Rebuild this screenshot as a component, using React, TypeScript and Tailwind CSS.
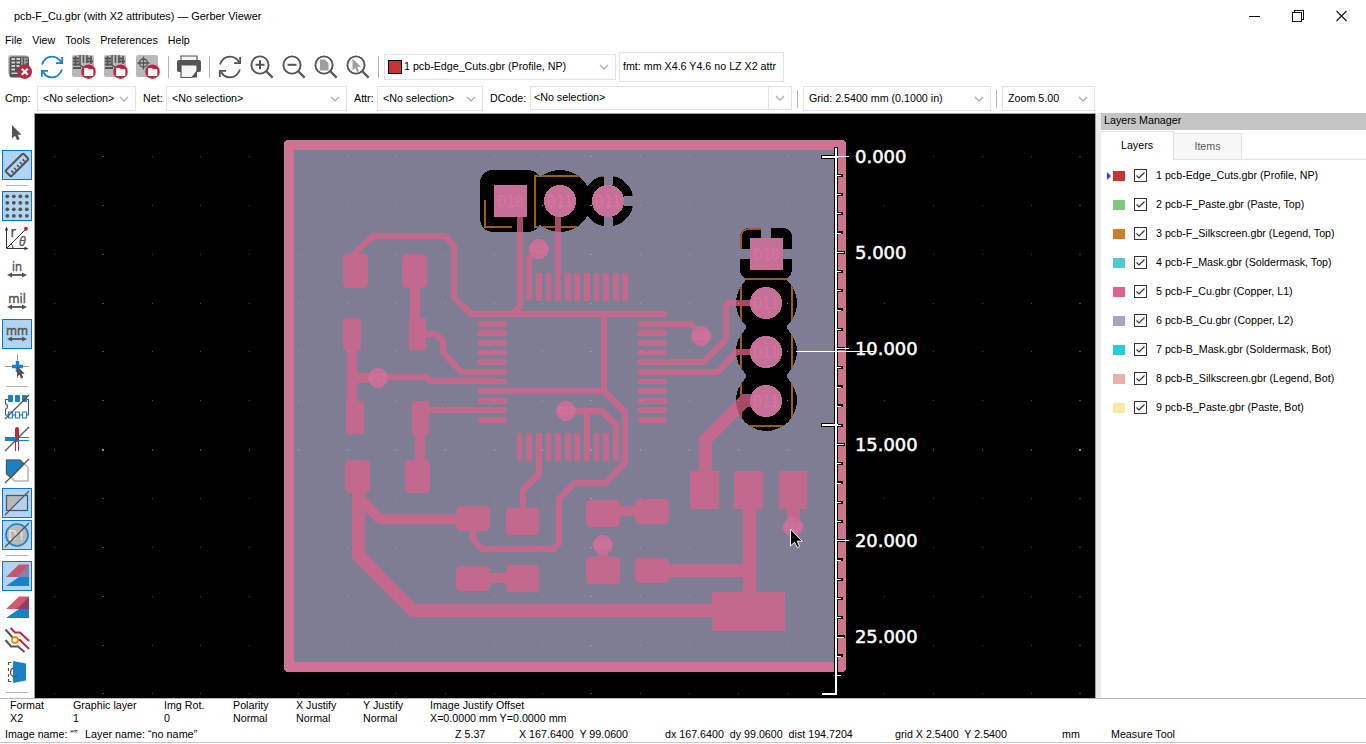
import React from "react";

const G = "#545454";
const BLUE = "#1a81c4";
const RED = "#bf2641";

function Chevron() {
  return (
    <svg className="block h-[6px] w-[10px] shrink-0" viewBox="0 0 10 6">
      <path d="M1 1 L5 5 L9 1" fill="none" stroke="#b4b4b4" strokeWidth="1.5" />
    </svg>
  );
}

function Combo({ text, cls }: { text: string; cls: string }) {
  return (
    <div className={"flex h-[25px] shrink-0 items-center justify-between border border-[#e2e2e2] bg-white pl-[5px] pr-[6px] " + cls}>
      <span>{text}</span>
      <Chevron />
    </div>
  );
}

function Svg24({ children }: { children: React.ReactNode }) {
  return (
    <svg className="block h-6 w-6 shrink-0 overflow-visible" viewBox="0 0 24 24">
      {children}
    </svg>
  );
}

function TopIcon({ children }: { children: React.ReactNode }) {
  return (
    <div className="flex h-8 w-8 shrink-0 items-center justify-center">
      <Svg24>{children}</Svg24>
    </div>
  );
}

function Board() {
  return (
    <>
      <rect x="0" y="0" width="22" height="22" rx="2" fill="#b9b9b9" />
      <g fill="none" stroke={G} strokeWidth="1.5">
        <path d="M3.5 1 v10 M8 0 v10 l4 3 v6 M15 0 v8 M11.5 0 v8 M19 1 v8" />
        <path d="M1 3.5 h6 M1 6.500 h6 M1 9.500 h7 M14 3.500 h6 M14 6.500 h7" strokeWidth="1.800" />
      </g>
      <rect x="1" y="12" width="8" height="2" fill={G} />
    </>
  );
}

function FolderBadge() {
  return (
    <>
      <circle cx="16.500" cy="16.700" r="7.300" fill={RED} />
      <path d="M12.700 13.700 h3 l1 1.200 h4 v5.400 h-8 z" fill="#fff" stroke="#fff" strokeWidth="1.200" strokeLinejoin="round" />
    </>
  );
}

function Refresh({ color }: { color: string }) {
  return (
    <g fill="none" stroke={color} strokeWidth="1.8">
      <path d="M2 9.5 C4 4 8 1.6 12 1.6 C16 1.6 19.5 4 21.5 8" />
      <path d="M22.2 2 V8.200 H16" />
      <path d="M22 14.5 C20 20 16 22.4 12 22.4 C8 22.4 4.5 20 2.5 16" />
      <path d="M1.8 22 V15.8 H8" />
    </g>
  );
}

function Lens({ children }: { children: React.ReactNode }) {
  return (
    <>
      <circle cx="10" cy="10" r="8.6" fill="none" stroke={G} strokeWidth="1.9" />
      <path d="M16.3 16.3 L22.600 22.600" stroke={G} strokeWidth="2.2" />
      {children}
    </>
  );
}

function Sep() {
  return <div className="mx-1 h-[22px] w-px shrink-0 bg-[#b4b4b4]" />;
}

function TopToolbar() {
  return (
    <div className="flex h-8 items-center pl-1">
      <TopIcon>
        <rect x="0" y="0" width="20" height="20" rx="3" fill="#c4c4c4" />
        <rect x="1.500" y="1.500" width="19.500" height="21" rx="2" fill={G} />
        <g fill="#d0d0d0">
          <rect x="3.500" y="3" width="3.500" height="2" /><rect x="3.500" y="6.500" width="3.500" height="2" /><rect x="3.500" y="10" width="3.500" height="2" /><rect x="3.500" y="13.500" width="3.500" height="2" />
          <rect x="8.500" y="3" width="3.500" height="2" /><rect x="8.500" y="6.500" width="3.500" height="2" /><rect x="8.500" y="10" width="3" height="2" />
          <path d="M13.500 2.500h1v8h-1zM16.500 2.500h1v7h-1zM18 3.500h2v1h-2zM18 6.500h2v1h-2zM3.500 17.500h6v1.500h-6z" />
        </g>
        <circle cx="16.800" cy="16.700" r="7.200" fill={RED} />
        <path d="M13.800 13.700 l6 6 M19.800 13.700 l-6 6" stroke="#fff" strokeWidth="2.2" />
      </TopIcon>
      <TopIcon><Refresh color={BLUE} /></TopIcon>
      <TopIcon><Board /><FolderBadge /></TopIcon>
      <TopIcon><Board /><FolderBadge /></TopIcon>
      <TopIcon>
        <rect x="0" y="0" width="22" height="22" rx="2.5" fill="#b9b9b9" />
        <g fill="none" stroke={G} strokeWidth="1.3">
          <circle cx="7.5" cy="8" r="4" />
          <path d="M7.5 1.5 v13 M1.5 8 h12" />
        </g>
        <FolderBadge />
      </TopIcon>
      <Sep />
      <TopIcon>
        <path d="M4 1 h16 v5 H4 z" fill="#f5f5f5" stroke={G} strokeWidth="1.2" />
        <path d="M0 7 q0 -2 2 -2 h20 q2 0 2 2 v8 q0 2 -2 2 H2 q-2 0 -2 -2 z" fill={G} />
        <path d="M4 10 h16 v6 l-5 6.5 H4 z" fill="#f5f5f5" stroke={G} strokeWidth="1.2" />
        <path d="M20 16 v6.5 h-5 z" fill={G} />
      </TopIcon>
      <Sep />
      <TopIcon><Refresh color={G} /></TopIcon>
      <TopIcon><Lens><path d="M5.500 9.800 h9 M10 5.300 v9" stroke={G} strokeWidth="2" /></Lens></TopIcon>
      <TopIcon><Lens><path d="M5.500 9.800 h9" stroke={G} strokeWidth="2" /></Lens></TopIcon>
      <TopIcon><Lens><path d="M6 4.5 h5 l3.5 3.5 v7.500 h-8.5 z" fill="#a0a0a0" /></Lens></TopIcon>
      <TopIcon><Lens><path d="M6.5 3.5 v12 l2.8 -2.6 l1.8 4 l2 -1 l-1.8 -3.8 h3.7 z" fill="#a0a0a0" /></Lens></TopIcon>
      <Sep />
      <div className="ml-px flex h-[26px] w-[232px] shrink-0 items-center border border-[#e2e2e2] pl-[3px] pr-[6px]">
        <div className="h-[14px] w-[14px] border border-black bg-[#c83434]" />
        <span className="ml-[2px] flex-1 pb-px">1 pcb-Edge_Cuts.gbr (Profile, NP)</span>
        <Chevron />
      </div>
      <div className="ml-[3px] flex h-[30px] w-[165px] shrink-0 items-center border border-[#e2e2e2] pb-px pl-[3px]">fmt: mm X4.6 Y4.6 no LZ X2 attr</div>
    </div>
  );
}

function SelectBar() {
  return (
    <div className="flex h-[31px] items-center pl-[5px]">
      <span className="w-[32px] shrink-0">Cmp:</span>
      <Combo text="<No selection>" cls="w-[99px]" />
      <span className="ml-[7px] w-[23px] shrink-0">Net:</span>
      <Combo text="<No selection>" cls="w-[181px]" />
      <span className="ml-[7px] w-[23px] shrink-0">Attr:</span>
      <Combo text="<No selection>" cls="w-[106px]" />
      <span className="ml-[7px] w-[40px] shrink-0">DCode:</span>
      <div className="mt-[3px] flex h-6 w-[262px] shrink-0 items-center self-start border border-[#e2e2e2] pl-[3px]">
        <span className="flex-1 pb-px">&lt;No selection&gt;</span>
        <div className="flex h-full w-[23px] items-center justify-center border-l border-[#e2e2e2]"><Chevron /></div>
      </div>
      <div className="ml-[5px] h-[18px] w-px shrink-0 bg-[#b4b4b4]" />
      <Combo text="Grid: 2.5400 mm (0.1000 in)" cls="ml-[5px] w-[188px]" />
      <div className="ml-[5px] h-[18px] w-px shrink-0 bg-[#b4b4b4]" />
      <Combo text="Zoom 5.00" cls="ml-[5px] w-[93px]" />
    </div>
  );
}

function Tool({ on, children }: { on?: boolean; children: React.ReactNode }) {
  return (
    <div className="flex h-8 w-[34px] items-center justify-center">
      <div className={on ? "flex h-[30px] w-[30px] items-center justify-center border border-[#0078d7] bg-[#b0d4f1]" : "flex h-[30px] w-[30px] items-center justify-center"}>
        <Svg24>{children}</Svg24>
      </div>
    </div>
  );
}

function HSep() {
  return (
    <div className="flex h-[9px] w-[34px] items-center justify-center">
      <div className="h-px w-[22px] bg-[#b4b4b4]" />
    </div>
  );
}

function UnitIcon({ label, w }: { label: string; w: number }) {
  return (
    <>
      <text x="12" y="12.500" textAnchor="middle" textLength={w} lengthAdjust="spacingAndGlyphs" fontFamily="Noto Sans, sans-serif" stroke={G} strokeWidth="0.400" fontSize="13" fill={G}>{label}</text>
      <path d="M5 17 H19" stroke={G} strokeWidth="1.800" />
      <path d="M2 17 l5 -2.600 v5.200 z M22 17 l-5 -2.600 v5.200 z" fill={G} />
    </>
  );
}

const gridDots = [2.5, 9, 15.5, 22];

function LeftToolbar() {
  const slash = <path d="M0 24 L24 0" stroke={G} strokeWidth="1.2" />;
  return (
    <div className="flex h-full w-[34px] shrink-0 flex-col bg-white pt-[3px]">
      <Tool><path d="M7 4 v13.5 l3 -2.8 l2.2 4.6 l2.5 -1.2 l-2.2 -4.4 h4 z" fill={G} /></Tool>
      <Tool on>
        <g transform="rotate(-45 12 12)" fill="none" stroke={G} strokeWidth="2">
          <rect x="-0.500" y="8" width="25" height="8" rx="1" />
          <path d="M4 15 v-3 M8 15 v-3 M12 15 v-3 M16 15 v-3 M20 15 v-3" strokeWidth="1.6" />
        </g>
      </Tool>
      <HSep />
      <Tool on>
        {gridDots.map((x) => gridDots.map((y) => <circle key={x + "-" + y} cx={x - 0.2} cy={y - 0.2} r="1.9" fill={G} />))}
      </Tool>
      <Tool>
        <g fill="none" stroke="#333" strokeWidth="1">
          <path d="M1.5 22 V3 M1.5 22.5 H21 M2 22 L20 4 M6 18 q2 1 2 4" />
        </g>
        <path d="M1.500 0.500 l-1.700 4 h3.400 z M23.500 22.500 l-4 -1.700 v3.400 z" fill="#333" />
        <circle cx="21" cy="2.700" r="2" fill={RED} />
        <text x="5.500" y="11" fontFamily="Noto Sans, sans-serif" fontSize="13.500" fill={G} stroke={G} strokeWidth="0.300">r</text>
        <text x="14" y="19.5" fontFamily="Noto Sans, sans-serif" fontStyle="italic" fontSize="12.500" fill={G} stroke={G} strokeWidth="0.300">θ</text>
      </Tool>
      <Tool><UnitIcon label="in" w={10} /></Tool>
      <Tool><UnitIcon label="mil" w={17.5} /></Tool>
      <Tool on><UnitIcon label="mm" w={22} /></Tool>
      <Tool>
        <path d="M0 12.5 H24 M12.5 0.5 V24" stroke="#9a9a9a" strokeWidth="1" />
        <path d="M12.5 7 v11 M7 12.5 h11" stroke={BLUE} strokeWidth="3.5" />
        <path d="M12 12 v11 l2.4 -2.2 l1.6 3.6 l2.2 -1 l-1.6 -3.6 h3.2 z" fill={G} />
      </Tool>
      <HSep />
      <Tool>
        <path d="M3 4.5 H0.500 V9 q2 0 2 2.5 q0 2.500 -2 2.5 V20 h3 M22 4.500 h1.500 V20 H3" fill="none" stroke={G} strokeWidth="1.1" />
        <path d="M3.500 0.500 h4 v6 h-4z M10.500 0.500 h4 v6 h-4z M17.500 0.500 h4 v6 h-4z" fill={BLUE} stroke={BLUE} />
        <path d="M3.500 17 h4 v6 h-4z M10.500 17 h4 v6 h-4z M17.500 17 h4 v6 h-4z" fill="#fff" stroke={BLUE} strokeWidth="1.200" />
        {slash}
      </Tool>
      <Tool>
        <path d="M10.500 11 V24 M13.500 11 V24" stroke={RED} strokeWidth="1" />
        <path d="M12 2 V13" stroke={RED} strokeWidth="4" strokeLinecap="round" />
        <path d="M0 12 H11" stroke={BLUE} strokeWidth="4" />
        <path d="M11 10.500 H24 M11 13.500 H24" stroke={BLUE} strokeWidth="1" />
        {slash}
      </Tool>
      <Tool>
        <path d="M1.500 1 H15 L23 8 V22 H9 L1.500 15 Z" fill="#fff" stroke="#c9c9c9" strokeWidth="1.500" />
        <path d="M1.500 1 H15 L19 5 L6 18.500 L1.500 15 Z" fill={BLUE} stroke={G} strokeWidth="1.200" />
        <path d="M7 18 L10 22 H23 V9 L20 5" fill="none" stroke="#bababa" strokeWidth="1.200" />
        {slash}
      </Tool>
      <Tool on>
        <path d="M1.500 19.500 V4.500 H19.500 L4.500 19.500 Z" fill="#b9b9b9" />
        <rect x="1.500" y="4.500" width="21" height="15" fill="none" stroke={G} strokeWidth="1.200" />
        {slash}
      </Tool>
      <Tool on>
        <circle cx="12" cy="12" r="11" fill="#b9b9b9" stroke={BLUE} strokeWidth="1.600" />
        <text x="3" y="16.500" fontFamily="Noto Sans, sans-serif" fontSize="14" fill="#e9e9e9" textLength="17" lengthAdjust="spacingAndGlyphs">D1</text>
        {slash}
      </Tool>
      <HSep />
      <Tool on>
        <path d="M1 22 L14 13 H24 V22 Z" fill={BLUE} />
        <path d="M1 13 L14 0.500 H24 V13 Z" fill="#c15670" />
        <path d="M12 13 L24 1 V13 Z" fill="#8583ad" />
      </Tool>
      <Tool>
        <path d="M1 22 L14 13 H24 V22 Z" fill={BLUE} />
        <path d="M1 13 L14 0.500 H24 V13 Z" fill="#cf5b70" />
        <path d="M12 13 L24 1 V13 Z" fill="#8f3f66" />
      </Tool>
      <Tool>
        <g fill="none" strokeWidth="2">
          <path d="M5.500 0 L10 4.500 H15 L24 13 M12 12 H15 L24 21" stroke={RED} />
          <path d="M0.500 1.500 L9 11 M0.500 12 L6 18.500 H13 L19.500 24" stroke={G} />
        </g>
        <circle cx="10" cy="12" r="3" fill="#fff" stroke="#f29100" strokeWidth="1.800" />
      </Tool>
      <Tool>
        <path d="M8 1 L21 3.500 V20.500 L8 23 Z" fill={BLUE} />
        <path d="M6 2.500 H3.500 V5 M3.500 8 v3 M3.500 14 v3 M3.500 19 V21.500 H6 M8 8 q-2.500 1 -2.500 4.500 q0 3.500 4 4.500" fill="none" stroke={G} strokeWidth="1.200" />
        <path d="M7 16 q4 2.500 6 -0.500 q-3 0 -6 0.500" fill={G} />
      </Tool>
      <HSep />
    </div>
  );
}

const clears = (
  <>
    <rect x="480" y="170" width="61" height="62" rx="13" />
    <circle cx="560" cy="201" r="31" />
    <circle cx="608" cy="201" r="25.500" />
    <rect x="533" y="178" width="12" height="47" />
    <rect x="580" y="186" width="12" height="30" />
    <rect x="740" y="228" width="52" height="51" rx="9" />
    <rect x="745" y="272" width="42" height="20" />
    <circle cx="766.500" cy="303" r="30.500" />
    <circle cx="766.500" cy="351.500" r="30.500" />
    <circle cx="766.500" cy="400.500" r="30.500" />
    <rect x="746" y="303" width="41" height="98" />
  </>
);

const tracks: [number, string][] = [
  [6, "520,215 520,306 513,313"],
  [6, "558,215 558,300"],
  [6, "539,249 529,258 529,300"],
  [6, "354,257 354,254 373,236 445,236 454,245.5 454,297.5 471,314 667,314"],
  [10, "415,280 415,325"],
  [10, "352,340 352,405"],
  [6, "420,334 436,334 443,341 443,352.500 461.500,372 505,372"],
  [10, "357,377.500 372,377.500"],
  [6, "378,377 426,377 430,381 495,381"],
  [6, "480,391 604,391 625,412 625,462.700 606,482.700 575,482.700 559,499 559,543 553,549 482,549 473,539.500 473,525"],
  [6, "425,410 504,410"],
  [10, "420,430 420,465"],
  [6, "604,314 604,391"],
  [6, "660,323.500 690,323.500 700,334"],
  [6, "660,361.500 704,361.500 725.500,340 725.500,306 729,302.500 760,302.500"],
  [6, "660,371.700 718,371.700 737,351.500 760,351.500"],
  [13, "760,400.500 745,400.500 705.500,440 705.500,475"],
  [13, "749.500,500 749.500,600"],
  [13, "660,570.500 750,570.500"],
  [13, "793.500,505 793.500,527"],
  [13, "358.500,480 358.500,555.500 413,610.500 720,610.500"],
  [10, "361,500 379.500,518.500 460,518.500"],
  [10, "485,578 510,578"],
  [6, "539,455 539,474 523,490 523,512"],
  [6, "566,411 602,411 616,425 616,461"],
  [6, "587,411 587,461"],
  [10, "615,511 640,511"],
  [10, "603,545 603,560"],
];

const pads: [number, number, number, number, number][] = [
  [343, 254, 25, 34, 5], [402, 254, 25, 34, 5],
  [343, 318, 18, 32, 0], [409, 318, 17, 32, 0],
  [346, 401, 18, 33, 0], [412, 401, 17, 33, 0],
  [345, 460, 25, 33, 5], [405, 460, 25, 33, 5],
  [456, 506, 34, 25, 5], [506, 508, 33, 27, 4],
  [456, 566, 34, 25, 5], [506, 565, 33, 27, 4],
  [586, 500, 34, 27, 5], [635, 499, 34, 25, 5],
  [586, 557, 34, 27, 4], [635, 558, 34, 25, 5],
  [690, 471, 29, 38, 0], [734, 471, 29, 38, 0], [779, 471, 28, 38, 0],
  [712, 592, 73, 39, 0],
];

const pinY = [321, 330, 340, 350, 359, 369, 379, 388, 398, 407, 417];
const pinX: [number, number][] = [[517, 5], [526, 6], [536, 6], [546, 5], [555, 6], [565, 6], [574, 6], [584, 6], [594, 5], [603, 6], [613, 6], [622, 6]];
const vias: [number, number][] = [[539, 249], [378, 378], [566, 411], [701, 336], [603, 545], [793, 527]];
const bigPads: [number, number][] = [[560, 201], [608, 201], [766, 303], [766, 352], [766, 401]];
const dotXs = Array.from({ length: 22 }, (_, k) => k);
const dotYs = Array.from({ length: 12 }, (_, k) => k);
const labels: [string, number][] = [["0.000", 0], ["5.000", 5], ["10.000", 10], ["15.000", 15], ["20.000", 20], ["25.000", 25]];

function Copper() {
  return (
    <>
      {tracks.map(([w, p]) => (
        <polyline key={p} points={p} fill="none" strokeWidth={w} strokeLinejoin="round" />
      ))}
    </>
  );
}

function PcbCanvas() {
  const ticks = Array.from({ length: 28 }, (_, k) => k);
  return (
    <svg className="block h-[584px] w-[1060px]" viewBox="35 114 1060 584" shapeRendering="crispEdges">
      <defs>
        <clipPath id="clear">{clears}</clipPath>
      </defs>
      <rect x="35" y="114" width="1060" height="584" fill="#000" />
      <rect x="284" y="140" width="562" height="532" rx="4" fill="#cf7394" />
      <rect x="294" y="150" width="542" height="512" fill="#7f7d94" />
      <g fill="#000">{clears}</g>
      <g clipPath="url(#clear)" fill="none" stroke="#9c5d1c" strokeWidth="2">
        <path d="M485 200 V227 H512 M535 176 H633 V227 H535 Z M741 249 V237 Q741 229 749 229 H761 M741 279 H792 V426 H741 Z" />
      </g>
      <g fill="#7f7d94">
        <path d="M604 170h9v15h-9z M604 217h9v15h-9z M624 196h12v10h-12z M761 226h10v12h-10z M738 249h12v10h-12z M783 249h12v10h-12z" />
      </g>
      <g stroke="#c2688c"><Copper /></g>
      <g stroke="#a64868" clipPath="url(#clear)"><Copper /></g>
      <g fill="#c2688c">
        {pads.map(([x, y, w, h, r]) => <rect key={x + "-" + y} x={x} y={y} width={w} height={h} rx={r} />)}
        {pinY.map((y) => (
          <React.Fragment key={y}>
            <rect x="478" y={y} width="29" height={y === 350 || y === 379 ? 5 : 6} rx="2" />
            <rect x="638" y={y} width="29" height={y === 350 || y === 379 ? 5 : 6} rx="2" />
          </React.Fragment>
        ))}
        {pinX.map(([x, w], i) => (
          <React.Fragment key={x}>
            {i > 1 && <rect x={x} y="273" width={w} height="28" rx="1" />}
            {i < 11 && <rect x={x} y="433" width={w} height="28" rx="1" />}
          </React.Fragment>
        ))}
      </g>
      <g fill="#c66f98">
        <rect x="494" y="185" width="33" height="32" />
        <rect x="750" y="238" width="33" height="32" />
        {bigPads.map(([x, y]) => <circle key={x + "-" + y} cx={x} cy={y} r="16" />)}
        {vias.map(([x, y]) => <circle key={x + "-" + y} cx={x} cy={y} r="10" />)}
      </g>
      <g fill="#d4759a" stroke="#d4759a" strokeWidth="0.300" textAnchor="middle" fontFamily="DejaVu Sans Mono, monospace" shapeRendering="auto">
        <text x="510.500" y="206.500" fontSize="15" textLength="26">D10</text>
        <text x="766.500" y="259.500" fontSize="15" textLength="26">D10</text>
        {bigPads.map(([x, y]) => <text key={x + "-" + y} x={x} y={y + 5.500} fontSize="15" textLength="26">D11</text>)}
        {vias.map(([x, y]) => <text key={x + "-" + y} x={x} y={y + 3} fontSize="9" textLength="16">D12</text>)}
      </g>
      {dotXs.map((i) =>
        dotYs.map((j) => {
          const x = Math.floor(54.400 + i * 48.850);
          const y = Math.floor(156.500 + j * 48.850);
          const onBoard = x > 294 && x < 836 && y < 662;
          const mx = i % 10 === 1;
          const my = j === 6;
          return (
            <rect key={i + "-" + j} x={mx ? x - 1 : x} y={y} width={mx ? 2 : 1} height={my ? 2 : 1} fill={onBoard ? "#9a98aa" : mx && my ? "#8a8a8a" : "#484848"} />
          );
        })
      )}
      <g fill="#000">
        <rect x="834" y="147" width="4" height="548" />
        <rect x="821" y="155" width="16" height="4" />
        <rect x="821" y="423" width="16" height="4" />
        {ticks.slice(1).map((k) => (
          <rect key={k} x="838" y={Math.round(155.500 + k * 19.230) - 1} width={k % 5 === 0 ? 7 : 5} height="3" />
        ))}
      </g>
      <g fill="#fff">
        <rect x="835" y="148" width="2" height="547" />
        <rect x="822" y="156" width="16" height="2" />
        <rect x="822" y="424" width="16" height="2" />
        <rect x="822" y="693" width="15" height="2" />
        {ticks.map((k) => (
          <rect key={k} x="837" y={Math.round(155.800 + k * 19.230)} width={k % 10 === 0 ? 12 : k % 5 === 0 ? 7 : 4} height="1" />
        ))}
        <rect x="796" y="351" width="79" height="1" />
      </g>
      <g fill="#fff" stroke="#fff" strokeWidth="0.500" fontFamily="DejaVu Sans, sans-serif" fontSize="17.800" shapeRendering="auto">
        {labels.map(([t, k]) => (
          <text key={t} x="855" y={162.600 + k * 19.230} textLength={t.length === 5 ? 51.500 : 62.500} lengthAdjust="spacingAndGlyphs">{t}</text>
        ))}
      </g>
      <path d="M790.500 529 v17 l4 -3.800 l2.800 5.500 l2.400 -1.200 l-2.500 -5.300 h5 z" fill="#000" stroke="#fff" strokeWidth="1" shapeRendering="auto" />
    </svg>
  );
}

const layers: [string, string][] = [
  ["1 pcb-Edge_Cuts.gbr (Profile, NP)", "bg-[#c83434]"],
  ["2 pcb-F_Paste.gbr (Paste, Top)", "bg-[#7fc87f]"],
  ["3 pcb-F_Silkscreen.gbr (Legend, Top)", "bg-[#ce7d2c]"],
  ["4 pcb-F_Mask.gbr (Soldermask, Top)", "bg-[#4fcbcb]"],
  ["5 pcb-F_Cu.gbr (Copper, L1)", "bg-[#db628b]"],
  ["6 pcb-B_Cu.gbr (Copper, L2)", "bg-[#a7a5c6]"],
  ["7 pcb-B_Mask.gbr (Soldermask, Bot)", "bg-[#28ccd9]"],
  ["8 pcb-B_Silkscreen.gbr (Legend, Bot)", "bg-[#e8b2a7]"],
  ["9 pcb-B_Paste.gbr (Paste, Bot)", "bg-[#f2eda1]"],
];

function LayersPanel() {
  return (
    <div className="-mt-px flex h-[585px] flex-1 flex-col border-l-[5px] border-[#ebebeb] bg-white">
      <div className="h-[17px] bg-[#c5c5c5] pl-[3px] leading-[15px]">Layers Manager</div>
      <div className="flex h-[30px] items-end border-b border-[#e2e2e2]">
        <div className="-mb-px flex h-[29px] w-[73px] items-center justify-center border-r border-t border-[#e2e2e2] bg-white pb-px">Layers</div>
        <div className="flex h-[26px] w-[68px] items-center justify-center border-r border-t border-[#e2e2e2] bg-[#f7f7f7] text-[#5c5c5c]">Items</div>
      </div>
      <div className="flex flex-col pt-px">
        {layers.map(([name, color], i) => (
          <div key={name} className="flex h-[29px] items-center pl-[6px]">
            <svg className="block h-[8px] w-[4px]" viewBox="0 0 4 8">{i === 0 && <path d="M0 0 L4 4 L0 8 Z" fill="#3a3af8" />}</svg>
            <div className={"ml-[2px] h-[10px] w-[12px] " + color} />
            <svg className="ml-[9px] block h-[13px] w-[13px]" viewBox="0 0 13 13">
              <rect x="0.500" y="0.500" width="12" height="12" fill="#fff" stroke="#333" />
              <path d="M2.500 6.500 L5 9 L10.500 3.500" fill="none" stroke="#333" strokeWidth="1.200" />
            </svg>
            <span className="ml-[9px]">{name}</span>
          </div>
        ))}
      </div>
    </div>
  );
}

const info: [string, string, string][] = [
  ["Format", "X2", "w-[63px]"],
  ["Graphic layer", "1", "w-[91px]"],
  ["Img Rot.", "0", "w-[69px]"],
  ["Polarity", "Normal", "w-[63px]"],
  ["X Justify", "Normal", "w-[67px]"],
  ["Y Justify", "Normal", "w-[67px]"],
  ["Image Justify Offset", "X=0.0000 mm Y=0.0000 mm", "w-[200px]"],
];

export default function App() {
  return (
    <div className="flex h-[744px] w-[1366px] flex-col overflow-hidden whitespace-pre bg-white font-['Liberation_Sans',Arial,sans-serif] text-[10.7px] leading-[13px] text-black">
      <div className="flex h-8 items-center pl-[14px]">
        <span className="flex-1 text-[10.9px]">pcb-F_Cu.gbr (with X2 attributes) — Gerber Viewer</span>
        <svg className="mr-[16px] block h-[12px] w-[102px]" viewBox="0 0 102 12" shapeRendering="crispEdges" fill="none" stroke="#111">
          <path d="M1 6.500 h11" />
          <path d="M44.500 2.500 h9 v9 h-9 z M46.500 2.500 v-2 h9 v9 h-2" />
          <path d="M88.500 1 l10 10 M98.500 1 l-10 10" shapeRendering="auto" strokeWidth="1.100" />
        </svg>
      </div>
      <div className="flex h-[19px] items-center gap-[10px] pb-[2px] pl-[5px]">
        <span>File</span><span>View</span><span>Tools</span><span>Preferences</span><span>Help</span>
      </div>
      <TopToolbar />
      <SelectBar />
      <div className="flex h-[584px]">
        <LeftToolbar />
        <div className="-mt-px h-[585px] w-[1062px] shrink-0 border-l border-r border-t border-[#a0a0a0]"><PcbCanvas /></div>
        <LayersPanel />
      </div>
      <div className="flex h-[29px] border-t border-[#b4b4b4] pl-[10px]">
        {info.map(([a, b, w]) => (
          <div key={a} className={"shrink-0 " + w}><div>{a}</div><div>{b}</div></div>
        ))}
      </div>
      <div className="flex h-[16px] items-center border-b border-[#c8c8c8] pb-px pl-[5px]">
        <span className="w-[80px]">Image name: “”</span>
        <span className="w-[370px] text-[10.8px]">Layer name: “no name”</span>
        <span className="w-[64px]">Z 5.37</span>
        <span className="w-[146px]">X 167.6400  Y 99.0600</span>
        <span className="w-[230px]">dx 167.6400  dy 99.0600  dist 194.7204</span>
        <span className="w-[167px]">grid X 2.5400  Y 2.5400</span>
        <span className="w-[49px]">mm</span>
        <span>Measure Tool</span>
      </div>
    </div>
  );
}
